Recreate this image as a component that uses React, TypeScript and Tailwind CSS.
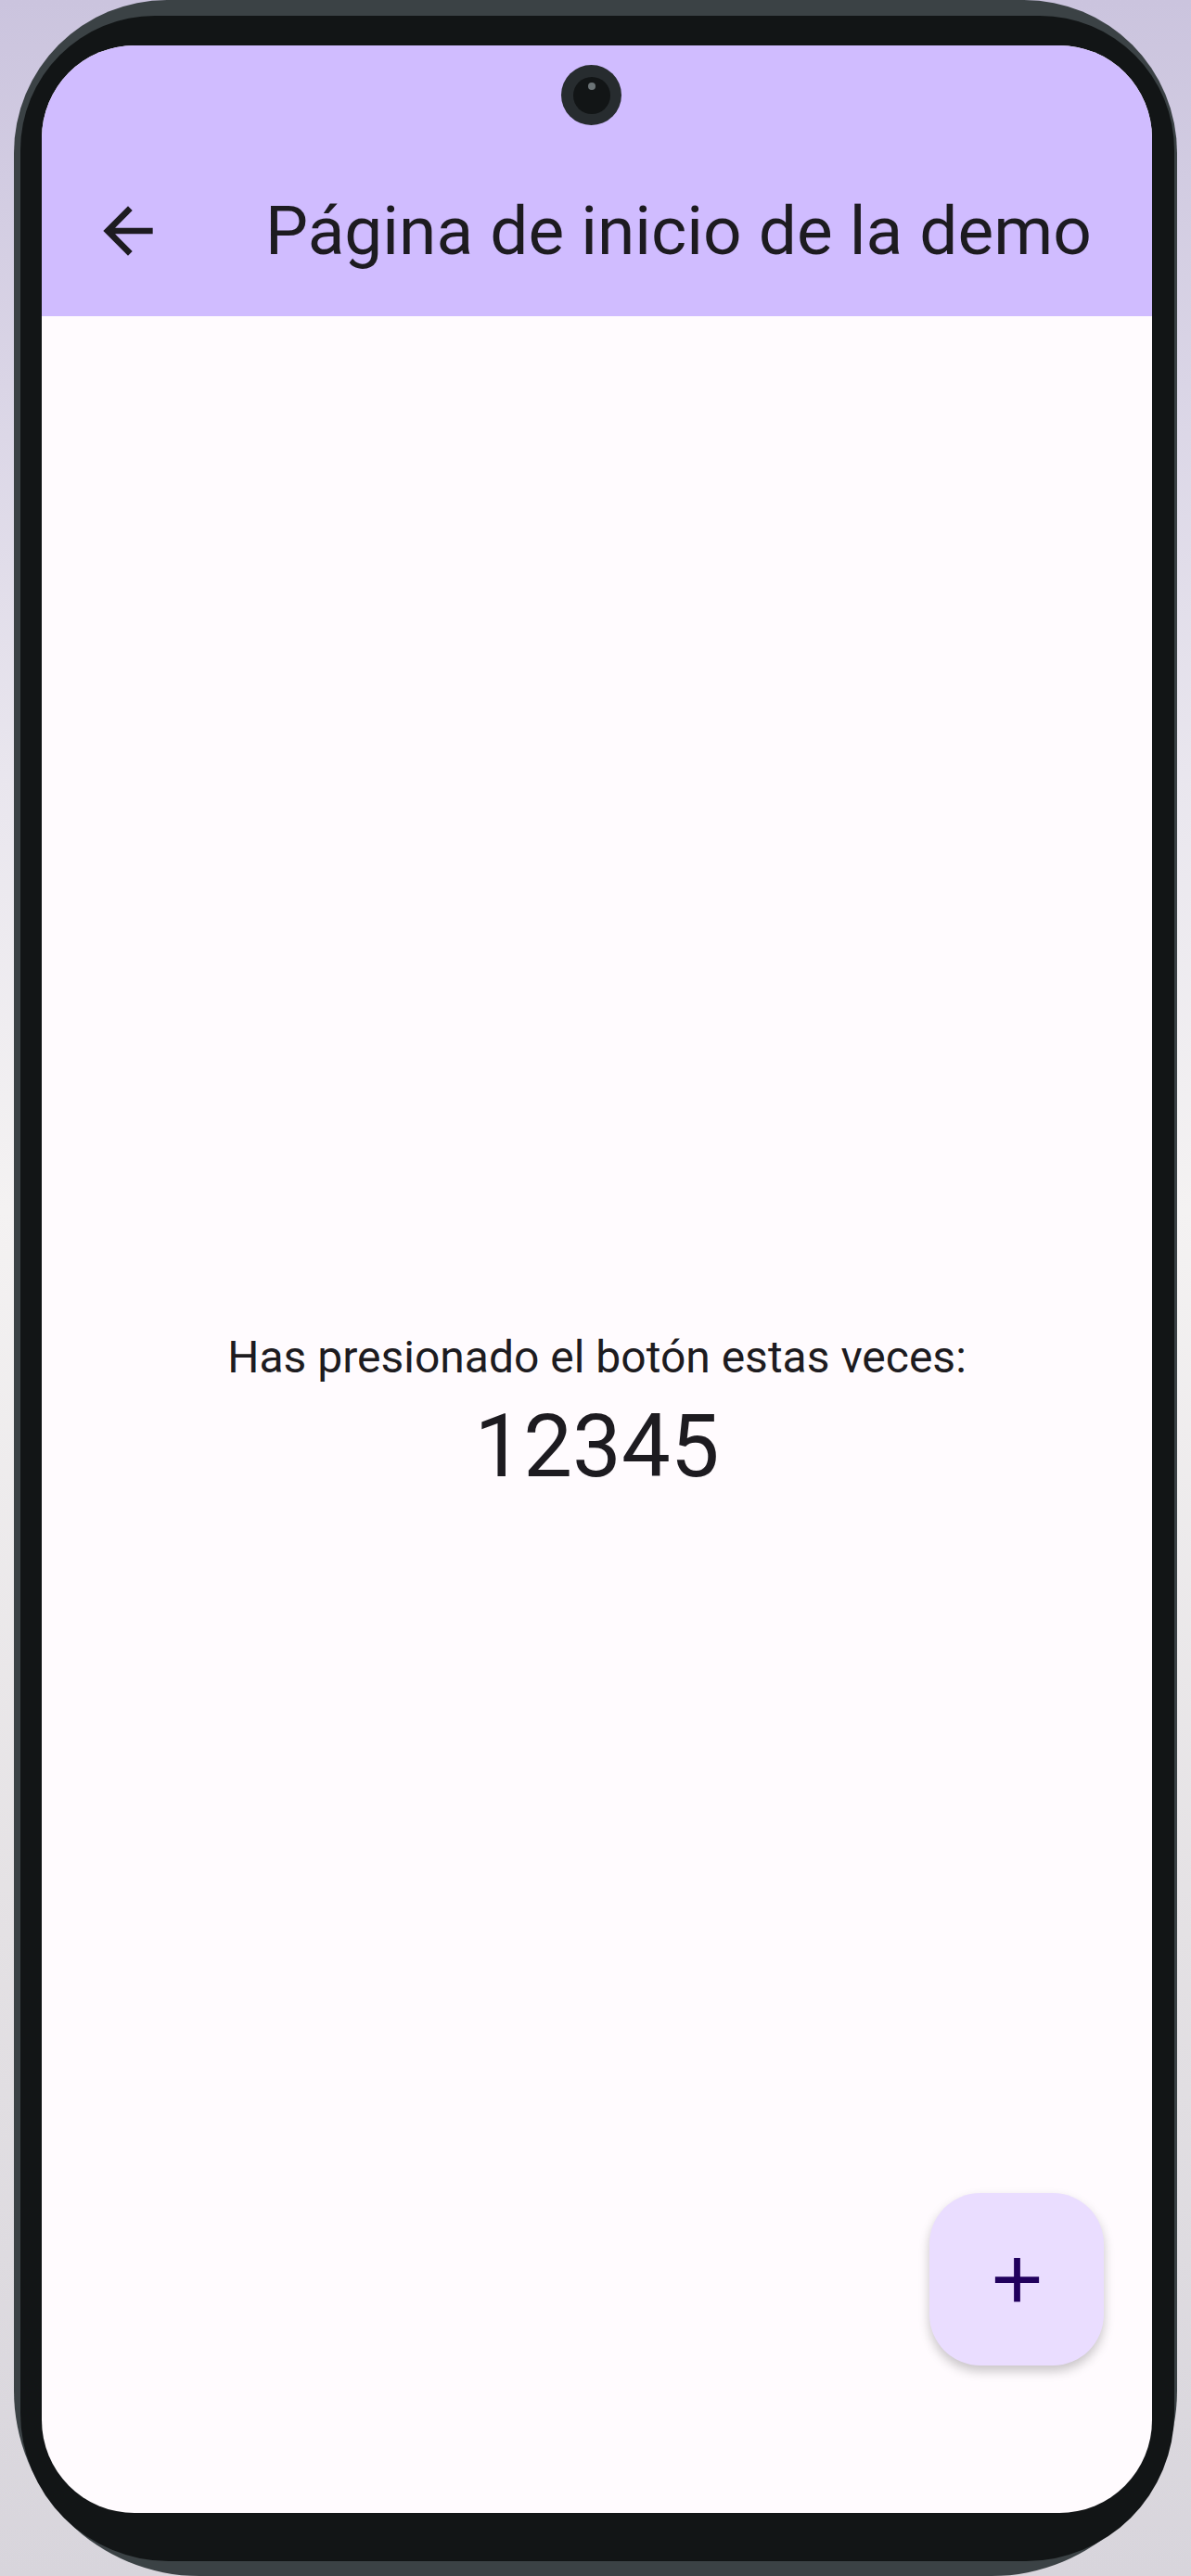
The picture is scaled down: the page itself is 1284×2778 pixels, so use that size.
import React from "react";

function BackArrow() {
  return (
    <svg viewBox="0 0 24 24" className="w-[80px] h-[80px]" fill="#1d1b20">
      <path d="M20 11H7.83l5.59-5.59L12 4l-8 8 8 8 1.41-1.41L7.83 13H20v-2z" />
    </svg>
  );
}

function PlusIcon() {
  return (
    <svg viewBox="0 0 24 24" className="w-[81px] h-[81px]" fill="#21005d">
      <path d="M19 13h-6v6h-2v-6H5v-2h6V5h2v6h6v2z" />
    </svg>
  );
}

export default function App() {
  const count = 12345;

  return (
    <div
      className="w-[1284px] h-[2778px] overflow-hidden bg-[linear-gradient(180deg,#cbc4de_0%,#e9e6ee_30%,#f4f2f2_47%,#e4e1e4_75%,#d8d5dc_100%)] pl-[15px] pr-[15px]"
      style={{ fontFamily: "Roboto, 'Noto Sans', sans-serif" }}
    >
      {/* phone frame */}
      <div className="w-[1254px] h-[2778px] bg-[#3b4245] rounded-t-[165px] rounded-b-[200px] pt-[17px] pl-[7px] pr-[3px] pb-[16px]">
        <div className="w-full h-full bg-[#121516] rounded-t-[145px] rounded-b-[160px] pt-[32px] pl-[23px] pr-[24px] pb-[52px]">
          {/* screen */}
          <div className="relative w-[1197px] h-[2661px] rounded-[100px] overflow-hidden bg-[#fffbfe] flex flex-col">
            {/* camera */}
            <div className="absolute left-[560px] top-[21px] w-[65px] h-[65px] rounded-full bg-[#272c2f] flex items-center justify-center">
              <div className="relative w-[40px] h-[40px] rounded-full bg-[#121516]">
                <div className="absolute left-[16px] top-[6px] w-[8px] h-[8px] rounded-full bg-[#6b7376]" />
              </div>
            </div>

            {/* app bar */}
            <header className="h-[292px] shrink-0 bg-[#d0bcff] pt-[130px]">
              <div className="h-[140px] flex items-center pl-[53px]">
                <BackArrow />
                <h1 className="ml-[108px] text-[73px] leading-none text-[#1d1b20] whitespace-nowrap">
                  Página de inicio de la demo
                </h1>
              </div>
            </header>

            {/* body */}
            <main className="flex-1 flex flex-col items-center justify-center text-[#1d1b20]">
              <p className="text-[48px] leading-[69px]">
                Has presionado el botón estas veces:
              </p>
              <p className="text-[94px] leading-[124px]">{count}</p>
            </main>

            {/* FAB */}
            <button className="absolute left-[957px] top-[2316px] w-[188px] h-[186px] rounded-[55px] bg-[#eaddff] shadow-[0_6px_12px_rgba(0,0,0,0.22)] flex items-center justify-center">
              <PlusIcon />
            </button>
          </div>
        </div>
      </div>
    </div>
  );
}
